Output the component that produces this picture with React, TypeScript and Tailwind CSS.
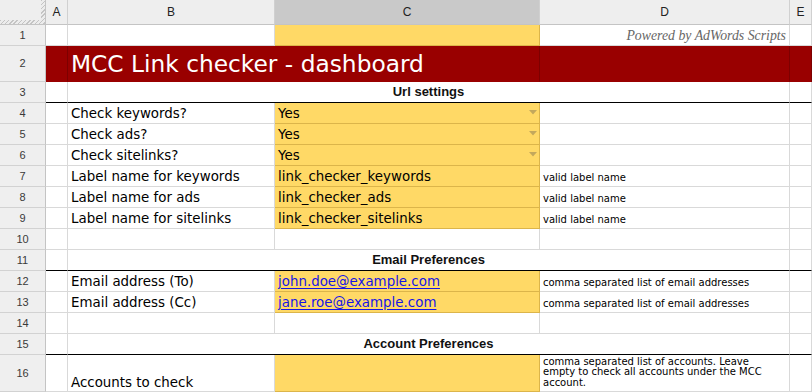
import React from "react";

const FONT = "font-['DejaVu_Sans',Verdana,sans-serif]";
const ARIAL = "font-['Liberation_Sans',Arial,sans-serif]";

const WHITE = "border-r border-b border-r-[#d9d9d9] border-b-[#d9d9d9] bg-white";
const WHITE_BLACK = "border-r border-b border-r-[#d9d9d9] border-b-black bg-white";
const YELLOW = "border-r border-b border-r-[#dcb54a] border-b-[#dcb54a] bg-[#ffd966]";
const RED = "border-r border-b border-r-[#7d0000] border-b-[#990000] bg-[#990000]";

function RowHead({ n }: { n: number }) {
  return (
    <div
      className={`bg-[#efefef] border-r border-b border-r-[#c4c4c4] border-b-[#d2d2d2] flex items-center justify-center text-[11px] text-[#3a3a3a] ${ARIAL}`}
    >
      {n}
    </div>
  );
}

function ColHead({ label, selected }: { label: string; selected?: boolean }) {
  return (
    <div
      className={`${
        selected ? "bg-[#c9c9c9]" : "bg-[#eeeeee]"
      } border-r border-b border-r-[#d0d0d0] border-b-[#c4c4c4] flex items-center justify-center text-[12px] text-[#222] ${ARIAL}`}
    >
      {label}
    </div>
  );
}

function Corner() {
  return (
    <div className="bg-[#eeeeee] border-r border-b border-r-[#c4c4c4] border-b-[#c4c4c4] flex flex-col">
      <div className="flex flex-1">
        <div className="flex-1" />
        <div className="w-[4px] bg-[repeating-linear-gradient(135deg,#c4c4c4_0px,#c4c4c4_1px,#ececec_1px,#ececec_3px)]" />
      </div>
      <div className="h-[4px] bg-[repeating-linear-gradient(135deg,#c4c4c4_0px,#c4c4c4_1px,#ececec_1px,#ececec_3px)]" />
    </div>
  );
}

function Label({ text, low }: { text?: string; low?: boolean }) {
  return (
    <div
      className={`${WHITE} flex items-end pl-[3px] ${
        low ? "pb-0" : "pb-[1px]"
      } text-[13.4px] leading-[17px] text-black ${FONT} whitespace-nowrap`}
    >
      {text}
    </div>
  );
}

function Note({ text }: { text: string }) {
  return (
    <div
      className={`${WHITE} flex items-end pl-[3px] pb-[2px] text-[10px] leading-[13px] text-black ${FONT} whitespace-nowrap`}
    >
      {text}
    </div>
  );
}

function YellowText({ text, dropdown }: { text: string; dropdown?: boolean }) {
  return (
    <div
      className={`${YELLOW} flex items-end pl-[3px] pb-[1px] text-[13.4px] leading-[17px] text-black ${FONT} whitespace-nowrap`}
    >
      <span className="flex-1">{text}</span>
      {dropdown && (
        <svg width="8" height="5" viewBox="0 0 8 5" className="mb-[7px] mr-[2px]">
          <polygon points="0,0 8,0 4,4.5" fill="#c3a85c" />
        </svg>
      )}
    </div>
  );
}

function EmailCell({ text }: { text: string }) {
  return (
    <div
      className={`${YELLOW} flex items-end pl-[3px] pb-[1px] text-[13.4px] leading-[17px] ${FONT} whitespace-nowrap`}
    >
      <span className="text-[#1515e6] underline decoration-[1px] underline-offset-[2px]">{text}</span>
    </div>
  );
}

function Section({ text }: { text: string }) {
  return (
    <div
      className={`col-span-3 border-b border-b-black bg-white border-r border-r-[#d9d9d9] flex items-end justify-center pb-[2px] text-[13px] leading-[16px] font-bold text-[#111] ${ARIAL}`}
    >
      {text}
    </div>
  );
}

function SectionRow({ n, text }: { n: number; text: string }) {
  return (
    <>
      <RowHead n={n} />
      <div className={WHITE_BLACK} />
      <Section text={text} />
      <div className={WHITE_BLACK} />
    </>
  );
}

function EmptyRow({ n }: { n: number }) {
  return (
    <>
      <RowHead n={n} />
      <div className={WHITE} />
      <div className={WHITE} />
      <div className={WHITE} />
      <div className={WHITE} />
      <div className={WHITE} />
    </>
  );
}

export default function App() {
  return (
    <div className="w-[812px] h-[392px] overflow-hidden bg-white">
      <div className="grid grid-cols-[46px_22px_207px_265px_250px_22px] grid-rows-[25px_21px_36px_repeat(13,21px)_37px]">
        {/* header */}
        <Corner />
        <ColHead label="A" />
        <ColHead label="B" />
        <ColHead label="C" selected />
        <ColHead label="D" />
        <ColHead label="E" />

        {/* row 1 */}
        <RowHead n={1} />
        <div className={WHITE} />
        <div className={WHITE} />
        <div className={YELLOW} />
        <div
          className={`${WHITE} flex items-end justify-end pr-[3px] pb-[1px] text-[13.8px] leading-[17px] italic text-[#666] font-['Liberation_Serif',Georgia,serif] whitespace-nowrap`}
        >
          Powered by AdWords Scripts
        </div>
        <div className={WHITE} />

        {/* row 2 */}
        <RowHead n={2} />
        <div className={RED} />
        <div
          className={`col-span-2 ${RED} flex items-end pl-[3px] pb-[2px] text-[23.3px] leading-[30px] text-white ${FONT} whitespace-nowrap`}
        >
          MCC Link checker - dashboard
        </div>
        <div className={RED} />
        <div className={RED} />

        {/* row 3 */}
        <SectionRow n={3} text="Url settings" />

        {/* rows 4-6 */}
        <RowHead n={4} />
        <div className={WHITE} />
        <Label text="Check keywords?" />
        <YellowText text="Yes" dropdown />
        <div className={WHITE} />
        <div className={WHITE} />

        <RowHead n={5} />
        <div className={WHITE} />
        <Label text="Check ads?" />
        <YellowText text="Yes" dropdown />
        <div className={WHITE} />
        <div className={WHITE} />

        <RowHead n={6} />
        <div className={WHITE} />
        <Label text="Check sitelinks?" />
        <YellowText text="Yes" dropdown />
        <div className={WHITE} />
        <div className={WHITE} />

        {/* rows 7-9 */}
        <RowHead n={7} />
        <div className={WHITE} />
        <Label text="Label name for keywords" />
        <YellowText text="link_checker_keywords" />
        <Note text="valid label name" />
        <div className={WHITE} />

        <RowHead n={8} />
        <div className={WHITE} />
        <Label text="Label name for ads" />
        <YellowText text="link_checker_ads" />
        <Note text="valid label name" />
        <div className={WHITE} />

        <RowHead n={9} />
        <div className={WHITE} />
        <Label text="Label name for sitelinks" />
        <YellowText text="link_checker_sitelinks" />
        <Note text="valid label name" />
        <div className={WHITE} />

        <EmptyRow n={10} />

        <SectionRow n={11} text="Email Preferences" />

        <RowHead n={12} />
        <div className={WHITE} />
        <Label text="Email address (To)" />
        <EmailCell text="john.doe@example.com" />
        <Note text="comma separated list of email addresses" />
        <div className={WHITE} />

        <RowHead n={13} />
        <div className={WHITE} />
        <Label text="Email address (Cc)" />
        <EmailCell text="jane.roe@example.com" />
        <Note text="comma separated list of email addresses" />
        <div className={WHITE} />

        <EmptyRow n={14} />

        <SectionRow n={15} text="Account Preferences" />

        <RowHead n={16} />
        <div className={WHITE} />
        <Label text="Accounts to check" low />
        <div className={YELLOW} />
        <div
          className={`${WHITE} flex flex-col justify-end pl-[3px] pb-[3px] text-[10px] leading-[10.5px] text-black ${FONT}`}
        >
          <span className="whitespace-nowrap">comma separated list of accounts. Leave</span>
          <span className="whitespace-nowrap">empty to check all accounts under the MCC</span>
          <span className="whitespace-nowrap">account.</span>
        </div>
        <div className={WHITE} />
      </div>
    </div>
  );
}
